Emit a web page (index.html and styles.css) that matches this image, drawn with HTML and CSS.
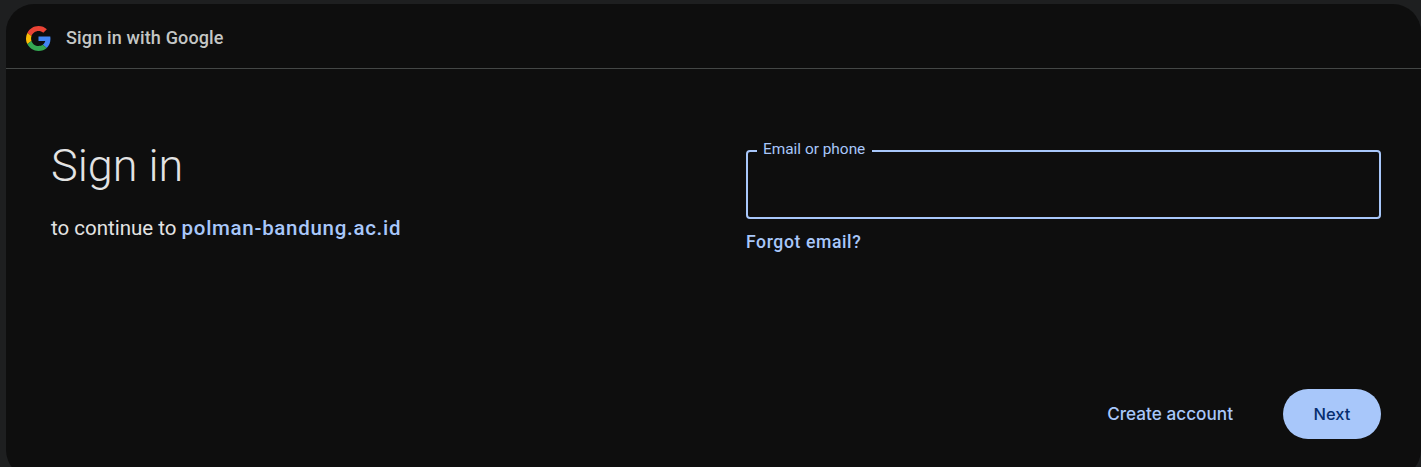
FILE: index.html
```html
<!DOCTYPE html>
<html lang="en">
<head>
<meta charset="utf-8">
<title>Sign in with Google</title>
<link rel="stylesheet" href="styles.css">
</head>
<body>
<main class="card">
  <header class="top">
    <svg class="glogo" viewBox="0 0 48 48" aria-hidden="true">
      <path fill="#EA4335" d="M24 9.5c3.54 0 6.71 1.22 9.21 3.6l6.85-6.85C35.9 2.38 30.47 0 24 0 14.62 0 6.51 5.38 2.56 13.22l7.98 6.19C12.43 13.72 17.74 9.5 24 9.5z"/>
      <path fill="#4285F4" d="M46.98 24.55c0-1.57-.15-3.09-.38-4.55H24v9.02h12.94c-.58 2.96-2.26 5.48-4.78 7.18l7.73 6c4.51-4.18 7.09-10.36 7.09-17.65z"/>
      <path fill="#FBBC05" d="M10.53 28.59c-.48-1.45-.76-2.99-.76-4.59s.27-3.14.76-4.59l-7.98-6.19C.92 16.46 0 20.12 0 24c0 3.88.92 7.54 2.56 10.78l7.97-6.19z"/>
      <path fill="#34A853" d="M24 48c6.48 0 11.93-2.13 15.89-5.81l-7.73-6c-2.15 1.45-4.92 2.3-8.16 2.3-6.26 0-11.57-4.22-13.47-9.91l-7.98 6.19C6.51 42.62 14.62 48 24 48z"/>
    </svg>
    <span class="brand">Sign in with Google</span>
  </header>
  <section class="content">
    <div class="intro">
      <h1 class="title">Sign in</h1>
      <p class="sub">to continue to <a class="domain" href="#">polman-bandung.ac.id</a></p>
    </div>
    <div class="form">
      <div class="field">
        <span class="label">Email or phone</span>
      </div>
      <a class="forgot" href="#">Forgot email?</a>
    </div>
  </section>
  <footer class="actions">
    <a class="create" href="#">Create account</a>
    <button class="next" type="button">Next</button>
  </footer>
</main>
</body>
</html>
```
FILE: styles.css
```css
html, body {
  margin: 0;
  height: 100%;
  overflow: hidden;
  background: #1e1f20;
}
body {
  padding: 4px 0 0 6px;
  box-sizing: border-box;
  font-family: Roboto, "Liberation Sans", sans-serif;
}
.card {
  width: 1415px;
  height: 474px;
  background: #0e0e0e;
  border-radius: 28px;
  display: flex;
  flex-direction: column;
  box-sizing: border-box;
}
.top {
  height: 65px;
  flex: none;
  display: flex;
  align-items: center;
  gap: 15px;
  padding: 4px 0 0 20px;
  box-sizing: border-box;
  border-bottom: 1px solid #444746;
}
.glogo {
  width: 25px;
  height: 25px;
  flex: none;
}
.brand {
  font-size: 18px;
  line-height: 22px;
  padding-bottom: 1px;
  letter-spacing: 0.15px;
  font-weight: 500;
  color: #c4c7c5;
}
.content {
  display: flex;
  padding: 0 40px 0 45px;
}
.intro {
  width: 695px;
  flex: none;
  padding-top: 71px;
}
.title {
  margin: 0;
  font-family: Roboto, sans-serif;
  font-size: 45px;
  line-height: 52px;
  font-weight: 300;
  color: #e3e3e3;
}
.sub {
  margin: 23px 0 0;
  font-size: 20.5px;
  line-height: 26px;
  color: #e3e3e3;
}
.domain {
  color: #a8c7fa;
  font-weight: 500;
  letter-spacing: 0.7px;
  text-decoration: none;
}
.form {
  flex: 1;
  padding-top: 81px;
}
.field {
  position: relative;
  height: 69px;
  box-sizing: border-box;
  border: 2px solid #a8c7fa;
  border-radius: 4px;
}
.label {
  position: absolute;
  left: 9px;
  top: -12px;
  padding: 0 7px 0 6px;
  font-size: 15.4px;
  line-height: 18px;
  color: #a8c7fa;
  background: #0e0e0e;
}
.forgot {
  display: block;
  margin-top: 13px;
  font-size: 17.6px;
  letter-spacing: 0.6px;
  line-height: 20px;
  font-weight: 500;
  color: #a8c7fa;
  text-decoration: none;
}
.actions {
  display: flex;
  align-items: center;
  justify-content: flex-end;
  gap: 50px;
  padding: 137px 40px 0 0;
}
.create {
  font-family: Inter, sans-serif;
  font-size: 17.2px;
  line-height: 20px;
  padding-bottom: 1px;
  font-weight: 500;
  color: #a8c7fa;
  text-decoration: none;
}
.next {
  width: 98px;
  height: 50px;
  padding: 0 0 1px;
  border: 0;
  border-radius: 25px;
  background: #a8c7fa;
  color: #062e6f;
  font-family: Inter, sans-serif;
  font-size: 16.5px;
  font-weight: 500;
}
```
